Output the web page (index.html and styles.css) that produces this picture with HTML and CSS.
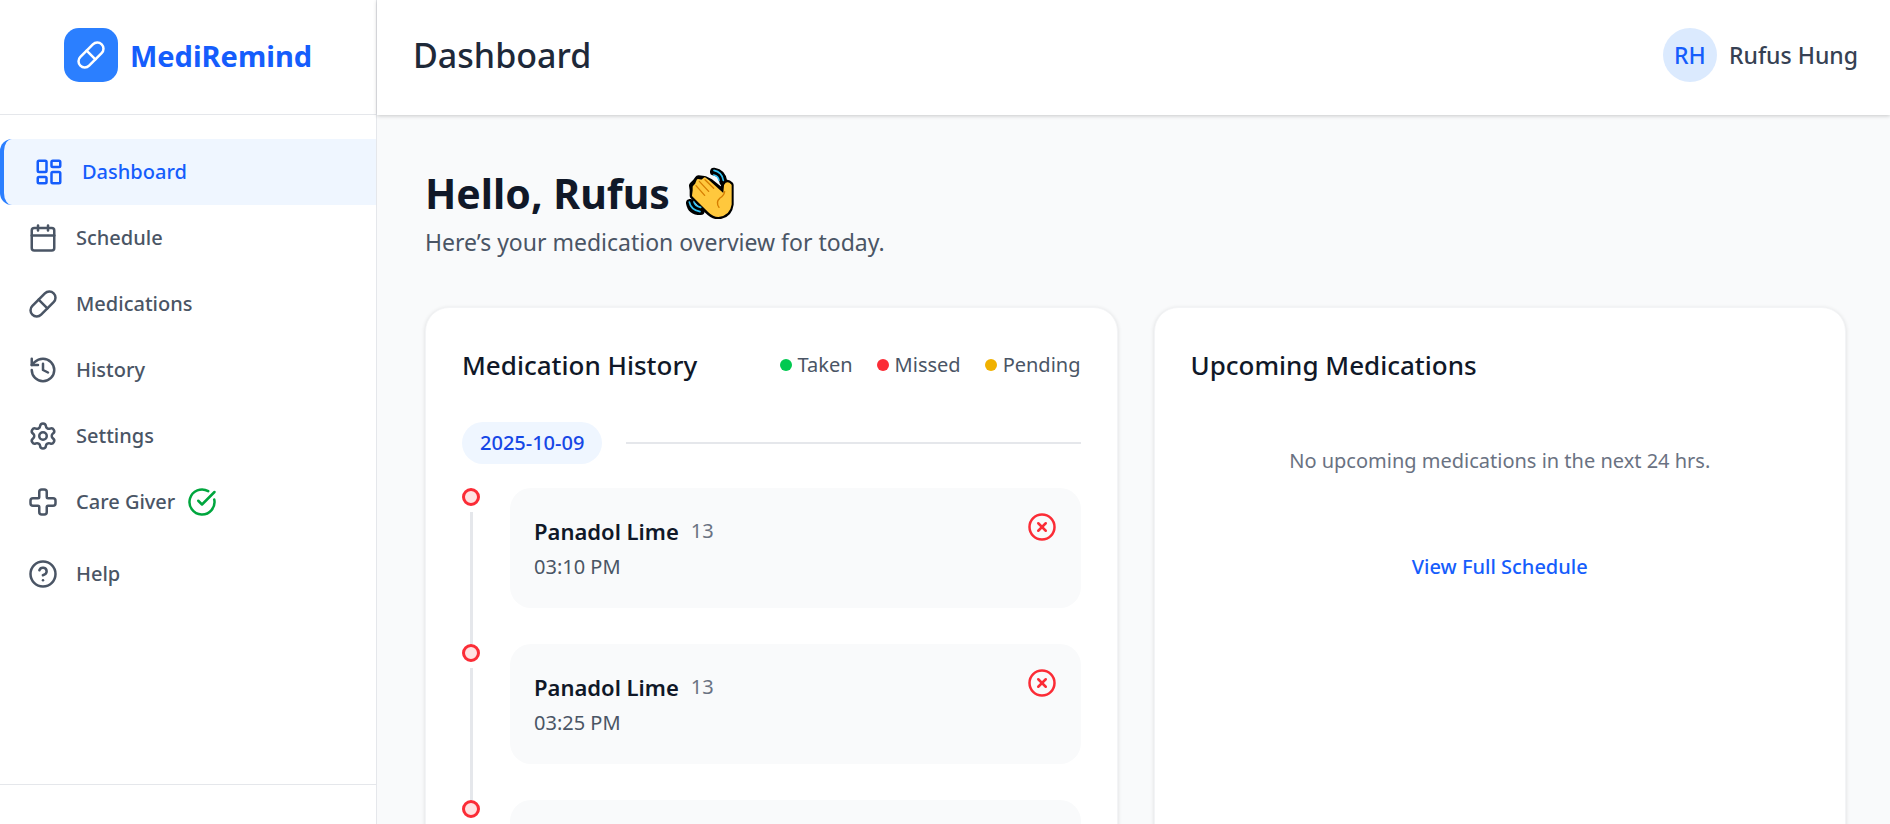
FILE: index.html
```html
<!DOCTYPE html>
<html lang="en">
<head>
    <meta charset="UTF-8">
    <meta name="viewport" content="width=device-width, initial-scale=1.0">
    <title>MediRemind</title>
    <link rel="stylesheet" href="styles.css">
</head>
<body>
    <aside class="sidebar">
        <div class="brand">
            <span class="brand-logo">
                <svg class="icon" viewBox="0 0 24 24"><path d="m10.5 20.5 10-10a4.95 4.95 0 1 0-7-7l-10 10a4.95 4.95 0 1 0 7 7Z"/><path d="m8.5 8.5 7 7"/></svg>
            </span>
            <span class="brand-name">MediRemind</span>
        </div>

        <nav class="nav">
            <a href="#" class="nav-link active">
                <svg class="icon" viewBox="0 0 24 24"><rect width="7" height="9" x="3" y="3" rx="1"/><rect width="7" height="5" x="14" y="3" rx="1"/><rect width="7" height="9" x="14" y="12" rx="1"/><rect width="7" height="5" x="3" y="16" rx="1"/></svg>
                <span>Dashboard</span>
            </a>
            <a href="#" class="nav-link">
                <svg class="icon" viewBox="0 0 24 24"><path d="M8 2v4"/><path d="M16 2v4"/><rect width="18" height="18" x="3" y="4" rx="2"/><path d="M3 10h18"/></svg>
                <span>Schedule</span>
            </a>
            <a href="#" class="nav-link">
                <svg class="icon" viewBox="0 0 24 24"><path d="m10.5 20.5 10-10a4.95 4.95 0 1 0-7-7l-10 10a4.95 4.95 0 1 0 7 7Z"/><path d="m8.5 8.5 7 7"/></svg>
                <span>Medications</span>
            </a>
            <a href="#" class="nav-link">
                <svg class="icon" viewBox="0 0 24 24"><path d="M3 12a9 9 0 1 0 9-9 9.75 9.75 0 0 0-6.74 2.74L3 8"/><path d="M3 3v5h5"/><path d="M12 7v5l4 2"/></svg>
                <span>History</span>
            </a>
            <a href="#" class="nav-link">
                <svg class="icon" viewBox="0 0 24 24"><path d="M9.671 4.136a2.34 2.34 0 0 1 4.659 0 2.34 2.34 0 0 0 3.319 1.915 2.34 2.34 0 0 1 2.33 4.033 2.34 2.34 0 0 0 0 3.831 2.34 2.34 0 0 1-2.33 4.033 2.34 2.34 0 0 0-3.319 1.915 2.34 2.34 0 0 1-4.659 0 2.34 2.34 0 0 0-3.32-1.915 2.34 2.34 0 0 1-2.33-4.033 2.34 2.34 0 0 0 0-3.831A2.34 2.34 0 0 1 6.35 6.051a2.34 2.34 0 0 0 3.319-1.915"/><circle cx="12" cy="12" r="3"/></svg>
                <span>Settings</span>
            </a>
            <a href="#" class="nav-link">
                <svg class="icon" viewBox="0 0 24 24"><path d="M4 9a2 2 0 0 0-2 2v2a2 2 0 0 0 2 2h4a1 1 0 0 1 1 1v4a2 2 0 0 0 2 2h2a2 2 0 0 0 2-2v-4a1 1 0 0 1 1-1h4a2 2 0 0 0 2-2v-2a2 2 0 0 0-2-2h-4a1 1 0 0 1-1-1V4a2 2 0 0 0-2-2h-2a2 2 0 0 0-2 2v4a1 1 0 0 1-1 1z"/></svg>
                <span class="nav-text">Care Giver
                    <svg class="icon icon-check" viewBox="0 0 24 24"><path d="M21.801 10A10 10 0 1 1 17 3.335"/><path d="m9 11 3 3L22 4"/></svg>
                </span>
            </a>
            <a href="#" class="nav-link nav-help">
                <svg class="icon" viewBox="0 0 24 24"><circle cx="12" cy="12" r="10"/><path d="M9.09 9a3 3 0 0 1 5.83 1c0 2-3 3-3 3"/><path d="M12 17h.01"/></svg>
                <span>Help</span>
            </a>
        </nav>

        <div class="sidebar-footer"></div>
    </aside>

    <div class="page">
        <header class="topbar">
            <h1>Dashboard</h1>
            <div class="user">
                <span class="avatar">RH</span>
                <span class="user-name">Rufus Hung</span>
            </div>
        </header>

        <main class="content">
            <h2 class="greeting">
                <span>Hello, Rufus</span>
                <svg class="wave" viewBox="48 36 144 156" role="img" aria-label="Waving hand">
                    <g stroke-linecap="round" stroke-linejoin="round" fill="none">
                        <path stroke="#000" stroke-width="24" d="M132 50q24 4 28 30M60 144q4 24 32 24"/>
                        <path stroke="#000" stroke-width="22" fill="#000" d="M70 105 68 92 78 82 85 72 103 74 120 82 162 116 164 90q8-8 16 0V148q-4 32-36 34-14 0-30-16L70 122Z"/>
                        <path stroke="#35c1f1" stroke-width="5" d="M132 46q24 5 28 30M131 60q14 3 16 16M58 141q4 23 32 29M72 141q3 12 20 16"/>
                        <path fill="#ffc83d" stroke="#ffc83d" stroke-width="8" d="M72 106 72 96 79 88 84 76 96 78 104 71 114 78 163 122 166 91q6-10 15 0V148q-4 30-36 34-14 0-28-14L70 122Z"/>
                        <path stroke="#d67d00" stroke-width="4" d="m105 74 26 26M88 79l28 30M78 92l26 29M164 110q-2 12-14 19-14 12-3 28"/>
                    </g>
                </svg>
            </h2>
            <p class="subtitle">Here’s your medication overview for today.</p>

            <div class="cards">
                <section class="card">
                    <div class="card-header">
                        <h3>Medication History</h3>
                        <ul class="legend">
                            <li><span class="dot taken"></span>Taken</li>
                            <li><span class="dot missed"></span>Missed</li>
                            <li><span class="dot pending"></span>Pending</li>
                        </ul>
                    </div>

                    <div class="day">
                        <span class="day-label">2025-10-09</span>
                        <span class="day-line"></span>
                    </div>

                    <ol class="timeline">
                        <li class="entry">
                            <span class="marker"></span>
                            <div class="entry-card">
                                <div>
                                    <p class="entry-name">Panadol Lime <span class="dose">13</span></p>
                                    <p class="entry-time">03:10 PM</p>
                                </div>
                                <svg class="icon icon-missed" viewBox="0 0 24 24"><circle cx="12" cy="12" r="10"/><path d="m15 9-6 6"/><path d="m9 9 6 6"/></svg>
                            </div>
                        </li>
                        <li class="entry">
                            <span class="marker"></span>
                            <div class="entry-card">
                                <div>
                                    <p class="entry-name">Panadol Lime <span class="dose">13</span></p>
                                    <p class="entry-time">03:25 PM</p>
                                </div>
                                <svg class="icon icon-missed" viewBox="0 0 24 24"><circle cx="12" cy="12" r="10"/><path d="m15 9-6 6"/><path d="m9 9 6 6"/></svg>
                            </div>
                        </li>
                        <li class="entry">
                            <span class="marker"></span>
                            <div class="entry-card"></div>
                        </li>
                    </ol>
                </section>

                <section class="card">
                    <div class="card-header">
                        <h3>Upcoming Medications</h3>
                    </div>
                    <p class="empty">No upcoming medications in the next 24 hrs.</p>
                    <a href="#" class="view-all">View Full Schedule</a>
                </section>
            </div>
        </main>
    </div>
</body>
</html>
```
FILE: styles.css
```css
*, ::before, ::after {
    box-sizing: border-box;
    margin: 0;
    padding: 0;
}

body {
    display: flex;
    height: 100vh;
    overflow: hidden;
    font-family: "Segoe UI", "Noto Sans", "Open Sans", sans-serif;
    font-size: 20px;
    line-height: 30px;
    color: #101828;
    background-color: #f9fafb;
}

a {
    text-decoration: none;
}

ul, ol {
    list-style: none;
}

.icon {
    width: 30px;
    height: 30px;
    flex-shrink: 0;
    fill: none;
    stroke: currentColor;
    stroke-width: 2;
    stroke-linecap: round;
    stroke-linejoin: round;
}

/* Sidebar */
.sidebar {
    display: flex;
    flex-direction: column;
    flex-shrink: 0;
    width: 377px;
    background-color: #fff;
    border-right: 1px solid #e5e7eb;
}

.brand {
    display: flex;
    justify-content: center;
    align-items: center;
    gap: 12px;
    padding: 28px 28px 32px;
    border-bottom: 1px solid #e5e7eb;
}

.brand-logo {
    display: flex;
    justify-content: center;
    align-items: center;
    width: 54px;
    height: 54px;
    border-radius: 15px;
    color: #fff;
    background-color: #2b7fff;
}

.brand-name {
    font-size: 29px;
    font-weight: 700;
    line-height: 45px;
    color: #155dfc;
}

.nav {
    flex: 1;
    padding-top: 24px;
}

.nav-link {
    display: flex;
    align-items: center;
    gap: 18px;
    padding: 18px 28px;
    font-weight: 500;
    color: #4a5565;
}

.nav-link.active {
    padding-left: 30px;
    border-left: 4px solid #2b7fff;
    border-radius: 12px 0 0 12px;
    color: #155dfc;
    background-color: #eff6ff;
}

.nav-text {
    display: flex;
    gap: 12px;
}

.nav-help {
    margin-top: 6px;
}

.icon-check {
    color: #00a63e;
}

.sidebar-footer {
    height: 40px;
    border-top: 1px solid #e5e7eb;
}

/* Top bar */
.page {
    display: flex;
    flex: 1;
    flex-direction: column;
    min-width: 0;
}

.topbar {
    display: flex;
    justify-content: space-between;
    align-items: center;
    padding: 28px 32px 33px 36px;
    background-color: #fff;
    box-shadow: 0 1px 4px rgba(0, 0, 0, 0.2);
}

.topbar h1 {
    font-size: 34px;
    font-weight: 500;
    line-height: 54px;
    color: #1e2939;
}

.user {
    display: flex;
    align-items: center;
    gap: 12px;
    font-size: 23px;
    font-weight: 500;
    color: #364153;
}

.avatar {
    display: flex;
    justify-content: center;
    align-items: center;
    width: 54px;
    height: 54px;
    border-radius: 50%;
    color: #155dfc;
    background-color: #dbeafe;
}

/* Dashboard */
.content {
    flex: 1;
    padding: 48px 44px 48px 48px;
    overflow-y: auto;
    scrollbar-width: none;
}

.greeting {
    display: flex;
    align-items: center;
    gap: 16px;
    font-size: 41px;
    font-weight: 700;
    line-height: 60px;
}

.wave {
    width: 48px;
    height: 52px;
}

.subtitle {
    margin-top: 2px;
    margin-bottom: 48px;
    font-size: 23px;
    line-height: 34px;
    color: #4a5565;
}

.cards {
    display: grid;
    grid-template-columns: repeat(2, 1fr);
    gap: 36px;
}

.card {
    padding: 36px;
    border: 1px solid #f3f4f6;
    border-radius: 24px;
    background-color: #fff;
    box-shadow: 0 1px 4px rgba(0, 0, 0, 0.12);
}

.card-header {
    display: flex;
    justify-content: space-between;
    align-items: center;
    margin-bottom: 36px;
}

.card-header h3 {
    font-size: 26px;
    font-weight: 500;
    line-height: 42px;
}

.legend {
    display: flex;
    gap: 24px;
    color: #4a5565;
}

.legend li {
    display: flex;
    align-items: center;
    gap: 6px;
}

.dot {
    width: 12px;
    height: 12px;
    border-radius: 50%;
}

.dot.taken {
    background-color: #00c950;
}

.dot.missed {
    background-color: #fb2c36;
}

.dot.pending {
    background-color: #f0b100;
}

.day {
    display: flex;
    align-items: center;
    gap: 24px;
    margin-bottom: 24px;
}

.day-label {
    padding: 6px 18px;
    border-radius: 21px;
    font-weight: 500;
    color: #1447e6;
    background-color: #eff6ff;
}

.day-line {
    flex: 1;
    height: 2px;
    background-color: #e5e7eb;
}

.entry {
    display: flex;
    gap: 30px;
}

.marker {
    display: flex;
    flex-direction: column;
    align-items: center;
    gap: 6px;
}

.marker::before {
    content: "";
    width: 18px;
    height: 18px;
    border: 3px solid #fb2c36;
    border-radius: 50%;
    background-color: #ffe2e2;
}

.marker::after {
    content: "";
    flex: 1;
    width: 3px;
    background-color: #e5e7eb;
}

.entry-card {
    display: flex;
    flex: 1;
    justify-content: space-between;
    min-height: 120px;
    margin-bottom: 36px;
    padding: 24px;
    border-radius: 21px;
    background-color: #f9fafb;
}

.entry-name {
    display: flex;
    align-items: center;
    gap: 12px;
    font-size: 22px;
    font-weight: 600;
    line-height: 38px;
}

.dose {
    font-size: 20px;
    font-weight: 400;
    color: #6a7282;
}

.entry-time {
    line-height: 34px;
    color: #4a5565;
}

.icon-missed {
    color: #fb2c36;
}

.empty {
    padding: 24px 0;
    text-align: center;
    color: #6a7282;
}

.view-all {
    display: block;
    margin-top: 52px;
    font-weight: 500;
    text-align: center;
    color: #155dfc;
}
```
